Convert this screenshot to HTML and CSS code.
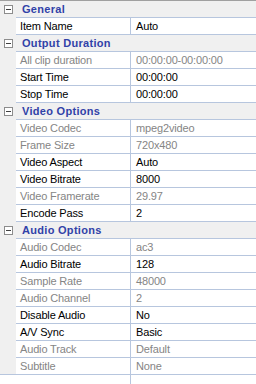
FILE: index.html
```html
<!DOCTYPE html>
<html>
<head>
<meta charset="utf-8">
<link rel="stylesheet" href="styles.css">
</head>
<body>
<div class="grid">
  <div class="row cat"><div class="gut"><span class="box"></span></div><div class="cells">General</div></div>
  <div class="row"><div class="gut"></div><div class="cells"><span class="lbl">Item Name</span><span class="val">Auto</span></div></div>
  <div class="row cat"><div class="gut"><span class="box"></span></div><div class="cells">Output Duration</div></div>
  <div class="row dis"><div class="gut"></div><div class="cells"><span class="lbl">All clip duration</span><span class="val">00:00:00-00:00:00</span></div></div>
  <div class="row"><div class="gut"></div><div class="cells"><span class="lbl">Start Time</span><span class="val">00:00:00</span></div></div>
  <div class="row"><div class="gut"></div><div class="cells"><span class="lbl">Stop Time</span><span class="val">00:00:00</span></div></div>
  <div class="row cat"><div class="gut"><span class="box"></span></div><div class="cells">Video Options</div></div>
  <div class="row dis"><div class="gut"></div><div class="cells"><span class="lbl">Video Codec</span><span class="val">mpeg2video</span></div></div>
  <div class="row dis"><div class="gut"></div><div class="cells"><span class="lbl">Frame Size</span><span class="val">720x480</span></div></div>
  <div class="row"><div class="gut"></div><div class="cells"><span class="lbl">Video Aspect</span><span class="val">Auto</span></div></div>
  <div class="row"><div class="gut"></div><div class="cells"><span class="lbl">Video Bitrate</span><span class="val">8000</span></div></div>
  <div class="row dis"><div class="gut"></div><div class="cells"><span class="lbl">Video Framerate</span><span class="val">29.97</span></div></div>
  <div class="row"><div class="gut"></div><div class="cells"><span class="lbl">Encode Pass</span><span class="val">2</span></div></div>
  <div class="row cat"><div class="gut"><span class="box"></span></div><div class="cells">Audio Options</div></div>
  <div class="row dis"><div class="gut"></div><div class="cells"><span class="lbl">Audio Codec</span><span class="val">ac3</span></div></div>
  <div class="row"><div class="gut"></div><div class="cells"><span class="lbl">Audio Bitrate</span><span class="val">128</span></div></div>
  <div class="row dis"><div class="gut"></div><div class="cells"><span class="lbl">Sample Rate</span><span class="val">48000</span></div></div>
  <div class="row dis"><div class="gut"></div><div class="cells"><span class="lbl">Audio Channel</span><span class="val">2</span></div></div>
  <div class="row"><div class="gut"></div><div class="cells"><span class="lbl">Disable Audio</span><span class="val">No</span></div></div>
  <div class="row"><div class="gut"></div><div class="cells"><span class="lbl">A/V Sync</span><span class="val">Basic</span></div></div>
  <div class="row dis"><div class="gut"></div><div class="cells"><span class="lbl">Audio Track</span><span class="val">Default</span></div></div>
  <div class="row dis last"><div class="gut"></div><div class="cells"><span class="lbl">Subtitle</span><span class="val">None</span></div></div>
  <div class="rest"><span class="restlbl"></span><span class="restval"></span></div>
</div>
</body>
</html>
```

FILE: styles.css
```css
html, body {
  margin: 0;
  padding: 0;
  background: #ffffff;
}
body {
  width: 256px;
  height: 384px;
  overflow: hidden;
  font-family: "Liberation Sans", Arial, sans-serif;
  font-size: 11px;
}
.grid {
  display: flex;
  flex-direction: column;
  border-top: 1px solid #a0a0a0;
  height: 383px;
}
.row {
  display: flex;
  height: 17px;
  flex: none;
}
.gut {
  width: 16px;
  flex: none;
  background: #f0f0f0;
  display: flex;
  align-items: flex-start;
}
.last .gut {
  height: 16px;
  border-bottom: 1px solid #b7c6de;
}
.box {
  width: 7px;
  height: 7px;
  margin: 4px 0 0 4px;
  border: 1px solid #8c8c8c;
  background: #ffffff;
  display: flex;
  align-items: center;
  justify-content: center;
}
.box::after {
  content: "";
  width: 5px;
  height: 1px;
  background: #404040;
}
.cells {
  flex: 1;
  display: flex;
  height: 16px;
  line-height: 16px;
  border-bottom: 1px solid #b7c6de;
  background: #ffffff;
  color: #000000;
  letter-spacing: -0.15px;
}
.cat .cells {
  background: #f0f0f0;
  font-weight: bold;
  color: #3142a8;
  padding-left: 6px;
  letter-spacing: 0.3px;
}
.lbl {
  width: 110px;
  padding-left: 4px;
  border-right: 1px solid #b7c6de;
  white-space: nowrap;
  overflow: hidden;
}
.val {
  padding-left: 5px;
  white-space: nowrap;
}
.dis .cells {
  color: #858585;
}
.rest {
  flex: 1;
  display: flex;
}
.restlbl {
  width: 130px;
  border-right: 1px solid #b7c6de;
}
```
